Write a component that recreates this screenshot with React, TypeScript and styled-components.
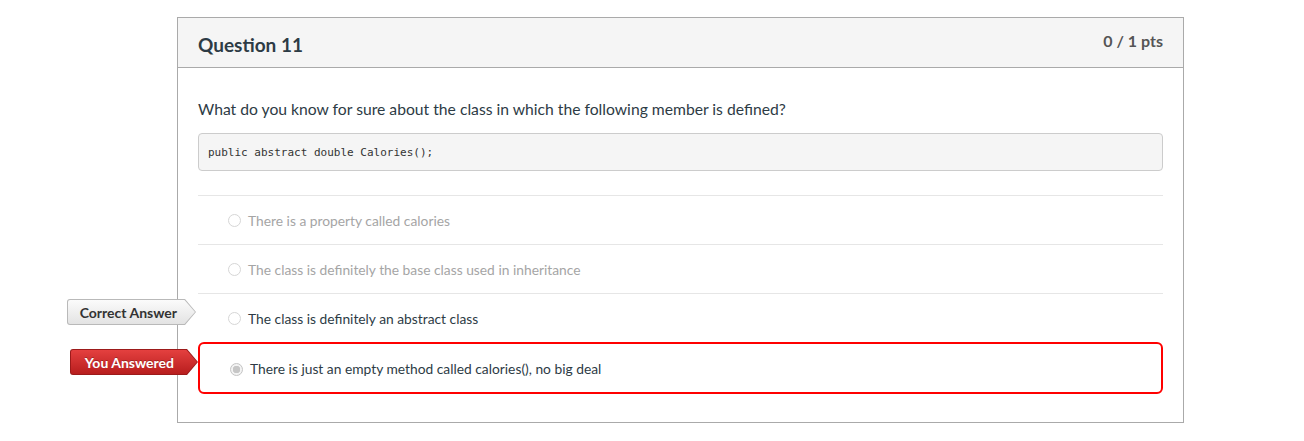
import React from "react";
import styled, { createGlobalStyle } from "styled-components";

const Global = createGlobalStyle`
  html, body { margin: 0; padding: 0; background: #fff; }
  body { font-family: Lato, "Open Sans", sans-serif; color: #2d3b45; }
`;

const Page = styled.div`
  padding: 17px 0 0 177px;
`;

const Card = styled.section`
  width: 1005px;
  border: 1px solid #aaaaaa;
  background: #fff;
`;

const Header = styled.header`
  display: flex;
  justify-content: space-between;
  align-items: flex-start;
  height: 49px;
  padding: 0 20px 0 20px;
  background: #f5f5f5;
  border-bottom: 1px solid #aaaaaa;
`;

const Title = styled.h2`
  margin: 0;
  padding-top: 15px;
  font-size: 19px;
  font-weight: 700;
  line-height: 24px;
  color: #2d3b45;
`;

const Points = styled.div`
  padding-top: 13px;
  font-size: 16px;
  font-weight: 700;
  line-height: 20px;
  color: #555;
`;

const Body = styled.div`
  padding: 30px 20px 28px 20px;
`;

const Prompt = styled.p`
  margin: 0 0 13px;
  font-size: 15.7px;
  line-height: 22px;
  color: #2d3b45;
`;

const Code = styled.pre`
  margin: 0 0 24px;
  height: 38px;
  box-sizing: border-box;
  padding: 12px 9px;
  background: #f5f5f5;
  border: 1px solid #cccccc;
  border-radius: 4px;
  font-family: "DejaVu Sans Mono", "Liberation Mono", monospace;
  font-size: 11px;
  line-height: 14px;
  color: #333;
`;

const Answers = styled.div`
  display: flex;
  flex-direction: column;
`;

const Row = styled.div<{ $picked?: boolean }>`
  position: relative;
  display: flex;
  align-items: center;
  gap: 7px;
  box-sizing: border-box;
  height: ${(p) => (p.$picked ? "52px" : "49px")};
  padding-left: 30px;
  padding-top: ${(p) => (p.$picked ? "2px" : "1px")};
  border-top: ${(p) => (p.$picked ? "none" : "1px solid #e6e6e6")};
  border: ${(p) => (p.$picked ? "2px solid #ff0000" : undefined)};
  border-radius: ${(p) => (p.$picked ? "6px" : "0")};
`;

const Radio = styled.span<{ $checked?: boolean }>`
  display: inline-block;
  box-sizing: border-box;
  width: 13px;
  height: 13px;
  border-radius: 50%;
  border: 1px solid ${(p) => (p.$checked ? "#c4c4c4" : "#d6d6d6")};
  background: ${(p) =>
    p.$checked
      ? "radial-gradient(circle, #c6c6c6 0 3.5px, #f3f3f3 4px)"
      : "#fff"};
`;

const AnswerText = styled.span<{ $dim?: boolean }>`
  font-size: 13.8px;
  line-height: 20px;
  color: ${(p) => (p.$dim ? "#a5a5a5" : "#2d3b45")};
`;

const Flag = styled.div<{ $kind: "correct" | "mine"; $top: number }>`
  position: absolute;
  right: calc(100% + 2px);
  top: ${(p) => p.$top}px;
  height: 26px;
  padding: 1px;
  box-sizing: border-box;
  clip-path: polygon(0 0, calc(100% - 11px) 0, 100% 50%, calc(100% - 11px) 100%, 0 100%);
  background: ${(p) => (p.$kind === "correct" ? "#b9b9b9" : "#9c1a1a")};
  border-radius: 3px 0 0 3px;
`;

const FlagInner = styled.div<{ $kind: "correct" | "mine" }>`
  height: 100%;
  box-sizing: border-box;
  display: flex;
  align-items: center;
  padding: 0 ${(p) => (p.$kind === "correct" ? "18px 0 12px" : "23px 0 14px")};
  clip-path: polygon(0 0, calc(100% - 10.5px) 0, 100% 50%, calc(100% - 10.5px) 100%, 0 100%);
  border-radius: 2px 0 0 2px;
  background: ${(p) =>
    p.$kind === "correct"
      ? "linear-gradient(#fbfbfb, #e3e3e3)"
      : "linear-gradient(#e4403f, #b81e1e)"};
  color: ${(p) => (p.$kind === "correct" ? "#333" : "#fff")};
  font-size: 14px;
  font-weight: 700;
  white-space: nowrap;
  text-shadow: ${(p) => (p.$kind === "mine" ? "0 -1px 0 rgba(0,0,0,0.25)" : "none")};
`;

const answers = [
  { text: "There is a property called calories", dim: true },
  { text: "The class is definitely the base class used in inheritance", dim: true },
  { text: "The class is definitely an abstract class", correct: true },
  { text: "There is just an empty method called calories(), no big deal", picked: true },
];

export default function App() {
  return (
    <Page>
      <Global />
      <Card>
        <Header>
          <Title>Question 11</Title>
          <Points>0 / 1 pts</Points>
        </Header>
        <Body>
          <Prompt>What do you know for sure about the class in which the following member is defined?</Prompt>
          <Code>public abstract double Calories();</Code>
          <Answers>
            {answers.map((a) => (
              <Row key={a.text} $picked={a.picked}>
                {a.correct && (
                  <Flag $kind="correct" $top={5}>
                    <FlagInner $kind="correct">Correct Answer</FlagInner>
                  </Flag>
                )}
                {a.picked && (
                  <Flag $kind="mine" $top={5}>
                    <FlagInner $kind="mine">You Answered</FlagInner>
                  </Flag>
                )}
                <Radio $checked={a.picked} />
                <AnswerText $dim={a.dim}>{a.text}</AnswerText>
              </Row>
            ))}
          </Answers>
        </Body>
      </Card>
    </Page>
  );
}
